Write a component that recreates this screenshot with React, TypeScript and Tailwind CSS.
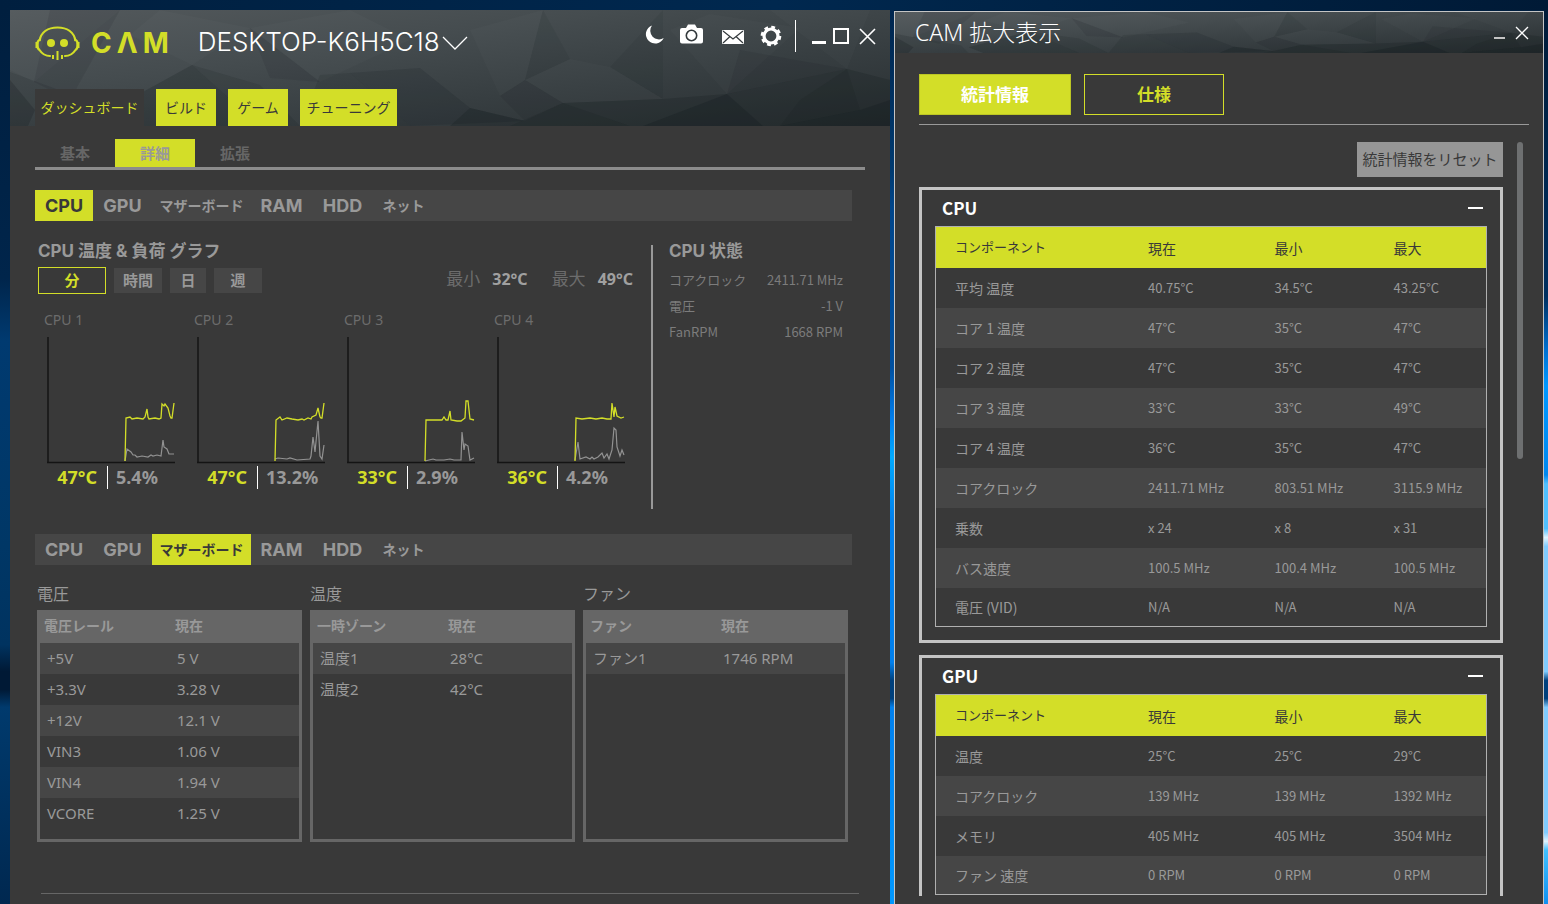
import React, { useState } from 'react';
import clsx from 'clsx';

type Row = string[];

interface CoreData {
  name: string;
  temp: string;
  load: string;
  tempLine: string;
  loadLine: string;
}

const PARTS = [
  { name: 'CPU', width: 'w-[58px]' },
  { name: 'GPU', width: 'w-[59px]' },
  { name: 'マザーボード', width: 'w-[99px]' },
  { name: 'RAM', width: 'w-[61px]' },
  { name: 'HDD', width: 'w-[61px]' },
  { name: 'ネット', width: 'w-[61px]' },
];

const CORES: CoreData[] = [
  {
    name: 'CPU 1',
    temp: '47°C',
    load: '5.4%',
    tempLine:
      '78,124 79,81 83,80 85,82 90,81 96,82 98,80 100,72 101,80 102,82 108,81 112,82 114,81 115,67 117,69 118,67 121,71 123,79 124,81 125,81 127,66',
    loadLine:
      '78,124 80,112 84,115 86,118 88,118 90,120 95,119 101,120 104,118 106,119 110,118 114,119 116,103 117,110 120,112 122,117 127,117',
  },
  {
    name: 'CPU 2',
    temp: '47°C',
    load: '13.2%',
    tempLine:
      '78,124 79,83 83,80 85,83 90,81 95,82 101,83 105,82 107,83 111,81 114,82 115,80 119,78 121,71 123,80 124,81 125,81 127,66',
    loadLine:
      '78,122 81,121 90,122 93,121 100,123 113,122 114,119 116,100 118,115 121,84 123,119 125,122 127,108',
  },
  {
    name: 'CPU 3',
    temp: '33°C',
    load: '2.9%',
    tempLine:
      '78,124 79,83 92,83 95,83 97,80 99,83 101,83 103,74 104,83 110,84 114,84 118,81 119,64 121,64 123,82 127,83',
    loadLine:
      '78,124 86,122 89,123 97,123 103,122 107,123 114,123 115,95 117,113 118,107 121,109 123,123 127,121',
  },
  {
    name: 'CPU 4',
    temp: '36°C',
    load: '4.2%',
    tempLine:
      '78,124 79,81 85,82 93,81 99,82 105,81 110,82 114,82 115,66 117,80 118,70 120,79 124,81 127,80',
    loadLine:
      '78,123 81,105 83,122 89,120 93,122 95,120 97,122 101,120 105,116 107,121 110,117 112,122 115,113 117,91 119,93 120,110 123,119 125,113 127,118',
  },
];

const CPU_STATUS: Row[] = [
  ['コアクロック', '2411.71 MHz'],
  ['電圧', '-1 V'],
  ['FanRPM', '1668 RPM'],
];

const BOARD_TABLES: { title: string; head: Row; rows: Row[] }[] = [
  {
    title: '電圧',
    head: ['電圧レール', '現在'],
    rows: [
      ['+5V', '5 V'],
      ['+3.3V', '3.28 V'],
      ['+12V', '12.1 V'],
      ['VIN3', '1.06 V'],
      ['VIN4', '1.94 V'],
      ['VCORE', '1.25 V'],
    ],
  },
  {
    title: '温度',
    head: ['一時ゾーン', '現在'],
    rows: [
      ['温度1', '28°C'],
      ['温度2', '42°C'],
    ],
  },
  { title: 'ファン', head: ['ファン', '現在'], rows: [['ファン1', '1746 RPM']] },
];

const STAT_HEAD: Row = ['コンポーネント', '現在', '最小', '最大'];

const CPU_STATS: Row[] = [
  ['平均 温度', '40.75°C', '34.5°C', '43.25°C'],
  ['コア 1 温度', '47°C', '35°C', '47°C'],
  ['コア 2 温度', '47°C', '35°C', '47°C'],
  ['コア 3 温度', '33°C', '33°C', '49°C'],
  ['コア 4 温度', '36°C', '35°C', '47°C'],
  ['コアクロック', '2411.71 MHz', '803.51 MHz', '3115.9 MHz'],
  ['乗数', 'x 24', 'x 8', 'x 31'],
  ['バス速度', '100.5 MHz', '100.4 MHz', '100.5 MHz'],
  ['電圧 (VID)', 'N/A', 'N/A', 'N/A'],
];

const GPU_STATS: Row[] = [
  ['温度', '25°C', '25°C', '29°C'],
  ['コアクロック', '139 MHz', '139 MHz', '1392 MHz'],
  ['メモリ', '405 MHz', '405 MHz', '3504 MHz'],
  ['ファン 速度', '0 RPM', '0 RPM', '0 RPM'],
];

// Low-poly backdrop behind both title bars
const PolyBackdrop: React.FC<{ id: string }> = ({ id }) => (
  <svg
    className="absolute inset-0 h-full w-full"
    viewBox="0 0 880 116"
    preserveAspectRatio="none"
    aria-hidden="true"
  >
    <defs>
      <linearGradient id={id} x1="0" y1="0" x2="1" y2="1">
        <stop offset="0" stopColor="#53595c" />
        <stop offset="0.35" stopColor="#454c4f" />
        <stop offset="0.65" stopColor="#373e41" />
        <stop offset="1" stopColor="#282e31" />
      </linearGradient>
    </defs>
    <rect width="880" height="116" fill={`url(#${id})`} />
    <g fill="#ffffff" fillOpacity="0.018">
      <polygon points="0,0 110,0 24,72 0,60" />
      <polygon points="150,0 240,18 182,55 120,25" />
      <polygon points="240,18 340,0 400,30 310,72" />
      <polygon points="460,20 533,0 515,70 490,86" />
      <polygon points="560,49 600,57 653,89 553,93 515,70" />
      <polygon points="660,20 700,4 790,18 717,84" />
      <polygon points="760,0 860,0 837,59" />
    </g>
    <g fill="#10181b">
      <polygon fillOpacity="0.12" points="0,62 90,95 100,116 0,116" />
      <polygon fillOpacity="0.22" points="0,70 25,100 18,116 0,116" />
      <polygon fillOpacity="0.1" points="24,72 40,0 110,0 60,90" />
      <polygon fillOpacity="0.2" points="182,55 100,100 120,116 250,116" />
      <polygon fillOpacity="0.12" points="182,55 250,75 290,116 250,116" />
      <polygon fillOpacity="0.12" points="310,65 340,63 400,116 290,116" />
      <polygon fillOpacity="0.14" points="340,63 410,58 460,98 515,111 400,116" />
      <polygon fillOpacity="0.1" points="240,18 310,72 260,68" />
      <polygon fillOpacity="0.08" points="533,0 560,49 515,70" />
      <polygon fillOpacity="0.08" points="600,57 653,0 653,89" />
      <polygon fillOpacity="0.1" points="515,70 553,93 515,111 490,86" />
      <polygon fillOpacity="0.2" points="460,98 515,111 553,93 653,89 717,84 837,59 880,70 880,116 440,116" />
      <polygon fillOpacity="0.12" points="553,93 620,116 500,116" />
      <polygon fillOpacity="0.25" points="717,84 633,116 753,116" />
      <polygon fillOpacity="0.12" points="837,59 850,100 770,116 790,90" />
      <polygon fillOpacity="0.25" points="850,100 880,90 880,116 770,116" />
      <polygon fillOpacity="0.1" points="717,84 730,40 837,59" />
    </g>
  </svg>
);

const SkullLogo = () => (
  <svg width="46" height="36" viewBox="0 0 46 36" fill="none" stroke="#d3de28" aria-hidden="true">
    <path d="M4.500 16C6 7 13 2.500 22.500 2.500S39 7 40.500 16" strokeWidth="2.200" />
    <path d="M4.500 15C1.500 16 1.500 23.500 4.500 25C6.500 28 10 31 15 31" strokeWidth="2.200" strokeLinecap="round" />
    <path d="M40.500 15c3 1 3 8.500 0 10C38.500 28 35 31 30 31" strokeWidth="2.200" strokeLinecap="round" />
    <path d="M2 17v6M43 17v6" strokeWidth="3" />
    <circle cx="16" cy="18" r="4" fill="#d3de28" stroke="none" />
    <circle cx="29" cy="18" r="4" fill="#d3de28" stroke="none" />
    <path d="M22.500 26v9M18 30v4M27 30v4" strokeWidth="2" />
  </svg>
);

const PartTabs: React.FC<{ initial: string; label: string }> = ({ initial, label }) => {
  const [active, setActive] = useState(initial);
  return (
    <nav aria-label={label} className="mr-[13px] flex h-[31px] bg-[#464646]">
      {PARTS.map((part) => (
        <button
          key={part.name}
          type="button"
          onClick={() => setActive(part.name)}
          className={clsx(
            'shrink-0 font-bold whitespace-nowrap',
            part.width,
            /^[A-Z]+$/.test(part.name) ? 'font-[Inter,sans-serif] text-lg' : 'text-sm',
            active === part.name ? 'bg-[#d3de28] text-[#393939]' : 'text-[#999]',
          )}
        >
          {part.name}
        </button>
      ))}
    </nav>
  );
};

const CoreChart: React.FC<{ core: CoreData }> = ({ core }) => (
  <div className="w-[150px]">
    <div className="pl-[6px] text-sm leading-[22px] text-[#6c6c6c]">{core.name}</div>
    <svg className="mt-[6px] ml-[9px] block" width="128" height="127" viewBox="0 0 128 127" fill="none" aria-hidden="true">
      <path d="M1 0v126M0 125.500h128" stroke="#141414" strokeWidth="1.500" />
      <polyline points={core.loadLine} stroke="#929292" strokeWidth="1.200" />
      <polyline points={core.tempLine} stroke="#d3de28" strokeWidth="1.300" />
    </svg>
    <div className="mt-px flex h-6 items-center text-lg font-bold">
      <span className="w-[59px] text-right text-[#d3de28]">{core.temp}</span>
      <span className="ml-[10px] h-[23px] w-px bg-white" />
      <span className="ml-2 text-[#999]">{core.load}</span>
    </div>
  </div>
);

const BoardTable: React.FC<{ title: string; head: Row; rows: Row[] }> = ({ title, head, rows }) => (
  <section className="min-w-0">
    <h3 className="text-base leading-[26px] text-[#999]">{title}</h3>
    <div className="mt-[3px] h-[232px] border-[3px] border-t-0 border-[#666]">
      <table className="w-full table-fixed border-collapse text-left text-[15px] text-[#999]">
        <thead>
          <tr className="h-[33px] bg-[#666] text-sm">
            <th className="w-[133px] pb-[2px] pl-1 font-bold">{head[0]}</th>
            <th className="pb-[2px] pl-[2px] font-bold">{head[1]}</th>
          </tr>
        </thead>
        <tbody>
          {rows.map((row) => (
            <tr key={row[0]} className="h-[31px] odd:bg-[#464646]">
              <td className="pl-[7px]">{row[0]}</td>
              <td className="pl-1">{row[1]}</td>
            </tr>
          ))}
        </tbody>
      </table>
    </div>
  </section>
);

const StatPanel: React.FC<{ title: string; rows: Row[] }> = ({ title, rows }) => {
  const [open, setOpen] = useState(true);
  return (
    <section className="border-[3px] border-[#c4c4c4] px-[13px] pb-[13px]">
      <div className="flex h-9 items-center justify-between pr-1 pl-[7px]">
        <h2 className="font-['Noto_Sans_CJK_JP',sans-serif] text-[17px] font-bold text-white">{title}</h2>
        <button type="button" aria-label={`${title} を折りたたむ`} onClick={() => setOpen(!open)} className="py-2">
          <span className="block h-[2px] w-[15px] bg-white" />
        </button>
      </div>
      {open && (
        <div className="border border-[#b0b0b0]">
          <table className="w-full table-fixed border-collapse text-left font-['Noto_Sans_CJK_JP',sans-serif] text-sm text-[#999]">
            <thead>
              <tr className="h-[41px] bg-[#d3de28] text-[#393939]">
                {STAT_HEAD.map((h, i) => (
                  <th
                    key={h}
                    className={clsx(
                      'font-normal',
                      i === 0 && 'w-[212px] pl-[19px] text-[13px]',
                      i === 1 && 'w-[23%]',
                      i === 2 && 'w-[119px]',
                    )}
                  >
                    {h}
                  </th>
                ))}
              </tr>
            </thead>
            <tbody>
              {rows.map((row) => (
                <tr key={row[0]} className="h-10 last:h-[38px] even:bg-[#464646]">
                  {row.map((cell, i) => (
                    <td key={i} className={i === 0 ? 'pl-[19px]' : 'text-[13px]'}>
                      {cell}
                    </td>
                  ))}
                </tr>
              ))}
            </tbody>
          </table>
        </div>
      )}
    </section>
  );
};

const MAIN_TABS = [
  { name: 'ダッシュボード', width: 'w-[109px] mr-3' },
  { name: 'ビルド', width: 'w-[60px] mr-3' },
  { name: 'ゲーム', width: 'w-[60px] mr-3' },
  { name: 'チューニング', width: 'w-[97px]' },
];

const RANGES = [
  { name: '分', width: 'w-[68px] mr-2' },
  { name: '時間', width: 'w-12 mr-2' },
  { name: '日', width: 'w-9 mr-2' },
  { name: '週', width: 'w-12' },
];

const DashboardWindow = () => {
  const [tab, setTab] = useState('ダッシュボード');
  const [view, setView] = useState('詳細');
  const [range, setRange] = useState('分');

  return (
    <main className="flex min-w-0 flex-col overflow-hidden bg-[#393939]">
      <header className="relative h-[116px] shrink-0">
        <PolyBackdrop id="poly-main" />
        <div className="relative flex h-full flex-col justify-between pr-[14px] pl-[25px]">
          <div className="flex items-start justify-between">
            <div className="flex h-[66px] items-center">
              <SkullLogo />
              <div
                aria-label="CAM"
                className="ml-[10px] flex gap-[5px] font-[Inter,sans-serif] text-[28px] font-bold text-[#d3de28]"
              >
                <span>C</span>
                <span>Λ</span>
                <span>M</span>
              </div>
              <select
                aria-label="デバイス"
                className="mb-1 ml-[29px] appearance-none bg-transparent font-[Inter,sans-serif] text-[26px] font-light text-white focus:outline-none"
              >
                <option>DESKTOP-K6H5C18</option>
              </select>
              <svg className="ml-px" width="26" height="14" viewBox="0 0 26 14" fill="none" stroke="#fff" strokeWidth="1.300" aria-hidden="true">
                <path d="M1 1l12 12L25 1" />
              </svg>
            </div>
            <div className="mt-[10px] flex h-8 items-center text-white">
              <button type="button" aria-label="ナイトモード" className="mr-4 mb-1">
                <svg width="19" height="19" viewBox="0 0 19 19" fill="currentColor">
                  <path d="M7 .5A9.300 9.300 0 1 0 18.700 13 8.700 8.700 0 0 1 7 .5Z" />
                </svg>
              </button>
              <button type="button" aria-label="スクリーンショット" className="mr-[19px] mb-1">
                <svg width="23" height="20" viewBox="0 0 23 20">
                  <path
                    fill="currentColor"
                    d="M2 4h4l2-3.500h7L17 4h4q2 0 2 2v11.500q0 2-2 2H2q-2 0-2-2V6q0-2 2-2Z"
                  />
                  <circle cx="11.500" cy="11.500" r="5.200" fill="none" stroke="#33393c" strokeWidth="1.600" />
                </svg>
              </button>
              <button type="button" aria-label="メッセージ" className="mt-[2px] mr-4">
                <svg width="22" height="14" viewBox="0 0 22 14">
                  <rect width="22" height="14" rx="1" fill="currentColor" />
                  <path d="M1 1l10 8 10-8M1 13l7-6.500M21 13l-7-6.500" fill="none" stroke="#33393c" strokeWidth="1.200" />
                </svg>
              </button>
              <button type="button" aria-label="設定" className="mr-[13px]">
                <svg width="22" height="22" viewBox="0 0 22 22" fill="none" stroke="currentColor">
                  <circle cx="11" cy="11" r="7" strokeWidth="3.200" />
                  <circle cx="11" cy="11" r="9" strokeWidth="2.600" strokeDasharray="3.800 3.269" />
                </svg>
              </button>
              <span className="mr-4 h-8 w-px bg-white" />
              <button type="button" aria-label="最小化" className="mr-[7px] pt-3">
                <span className="block h-[3px] w-[14px] bg-white" />
              </button>
              <button type="button" aria-label="最大化" className="mr-[10px] size-4 border-2 border-white" />
              <button type="button" aria-label="閉じる">
                <svg width="17" height="17" viewBox="0 0 17 17" stroke="currentColor" strokeWidth="1.600">
                  <path d="M1 1l15 15M16 1L1 16" />
                </svg>
              </button>
            </div>
          </div>
          <nav aria-label="メイン" className="flex h-[37px]">
            {MAIN_TABS.map((t) => (
              <button
                key={t.name}
                type="button"
                onClick={() => setTab(t.name)}
                className={clsx(
                  'shrink-0 text-sm whitespace-nowrap',
                  t.width,
                  tab === t.name ? 'bg-[#393939] text-[#d3de28]' : 'bg-[#d3de28] text-[#393939]',
                )}
              >
                {t.name}
              </button>
            ))}
          </nav>
        </div>
      </header>

      <div className="px-[25px] pt-[13px]">
        <nav aria-label="表示" className="flex border-b-[3px] border-[#8c8c8c]">
          {['基本', '詳細', '拡張'].map((v) => (
            <button
              key={v}
              type="button"
              onClick={() => setView(v)}
              className={clsx(
                'h-7 w-20 text-[15px] font-bold',
                view === v ? 'bg-[#d3de28] text-[#999]' : 'text-[#666]',
              )}
            >
              {v}
            </button>
          ))}
        </nav>

        <div className="mt-5">
          <PartTabs initial="CPU" label="グラフ" />
        </div>

        <div className="mt-6 mr-[22px] ml-[3px] flex h-[264px]">
          <section className="min-w-0 flex-1">
            <h2 className="font-[Inter,'Noto_Sans_CJK_JP',sans-serif] text-[17px] leading-3 font-bold text-[#999]">
              CPU 温度 & 負荷 グラフ
            </h2>
            <div className="mt-[10px] flex h-[27px] items-center">
              {RANGES.map((r) => (
                <button
                  key={r.name}
                  type="button"
                  onClick={() => setRange(r.name)}
                  className={clsx(
                    'text-[15px] font-bold',
                    r.width,
                    range === r.name
                      ? 'h-[27px] border border-[#d3de28] text-[#d3de28]'
                      : 'h-[25px] bg-[#464646] text-[#999]',
                  )}
                >
                  {r.name}
                </button>
              ))}
              <dl className="mr-[18px] mb-1 ml-auto flex items-center text-[17px] leading-[22px] text-[#6c6c6c]">
                <dt>最小</dt>
                <dd className="ml-3 text-base font-bold text-[#a0a0a0]">32°C</dd>
                <dt className="ml-6">最大</dt>
                <dd className="ml-3 text-base font-bold text-[#a0a0a0]">49°C</dd>
              </dl>
            </div>
            <div className="mt-[15px] flex">
              {CORES.map((core) => (
                <CoreChart key={core.name} core={core} />
              ))}
            </div>
          </section>

          <section className="flex w-[192px] shrink-0 flex-col border-l-2 border-[#999] pl-4">
            <h2 className="font-[Inter,'Noto_Sans_CJK_JP',sans-serif] text-[17px] leading-3 font-bold text-[#999]">
              CPU 状態
            </h2>
            <dl className="mt-[10px] font-['Noto_Sans_CJK_JP',sans-serif] text-[13px] text-[#7c7c7c]">
              {CPU_STATUS.map(([name, value]) => (
                <div key={name} className="flex h-[26px] items-center justify-between">
                  <dt>{name}</dt>
                  <dd>{value}</dd>
                </div>
              ))}
            </dl>
          </section>
        </div>

        <div className="mt-[25px]">
          <PartTabs initial="マザーボード" label="詳細" />
        </div>

        <div className="mt-4 mr-[17px] ml-[2px] grid grid-cols-3 gap-2">
          {BOARD_TABLES.map((t) => (
            <BoardTable key={t.title} {...t} />
          ))}
        </div>
        <hr className="mt-[51px] mr-[6px] ml-[6px] border-[#666]" />
      </div>
    </main>
  );
};

const ExpandedWindow = () => {
  const [page, setPage] = useState('統計情報');
  return (
    <aside className="mt-px flex min-h-0 min-w-0 flex-col overflow-hidden border border-b-0 border-[#c4c4c4] bg-[#393939] pb-2">
      <header className="relative h-[41px] shrink-0">
        <PolyBackdrop id="poly-side" />
        <div className="relative flex h-full items-center justify-between pr-[14px] pl-5 text-white">
          <h1 className="font-['Noto_Sans','Noto_Sans_CJK_JP',sans-serif] text-[23px] font-light">CAM 拡大表示</h1>
          <div className="flex items-center gap-[10px]">
            <button type="button" aria-label="最小化" className="pt-[10px]">
              <span className="block h-[2px] w-[11px] bg-[#c4c4c4]" />
            </button>
            <button type="button" aria-label="閉じる">
              <svg width="14" height="14" viewBox="0 0 14 14" stroke="currentColor" strokeWidth="1.300">
                <path d="M1 1l12 12M13 1L1 13" />
              </svg>
            </button>
          </div>
        </div>
      </header>

      <nav aria-label="ページ" className="mt-[21px] mr-[14px] ml-6 flex gap-[13px] border-b border-[#999] pb-[9px]">
        {['統計情報', '仕様'].map((p) => (
          <button
            key={p}
            type="button"
            onClick={() => setPage(p)}
            className={clsx(
              'h-[41px] border text-[17px] font-bold',
              p === '仕様' ? 'w-[140px]' : 'w-[152px]',
              page === p ? 'border-[#bcc624] bg-[#d3de28] text-white' : 'border-[#d3de28] text-[#d3de28]',
            )}
          >
            {p}
          </button>
        ))}
      </nav>

      <div className="mt-[17px] mr-5 ml-6 flex min-h-0 flex-1 gap-[14px]">
        <div className="min-w-0 flex-1 overflow-hidden">
          <div className="flex justify-end">
            <button type="button" className="h-[35px] w-[146px] bg-[#969696] text-[15px] whitespace-nowrap text-[#393939]">
              統計情報をリセット
            </button>
          </div>
          <div className="mt-[10px] flex flex-col gap-3">
            <StatPanel title="CPU" rows={CPU_STATS} />
            <StatPanel title="GPU" rows={GPU_STATS} />
          </div>
        </div>
        <div className="h-[42%] w-[6px] shrink-0 rounded-full bg-[#6e7071]" />
      </div>
    </aside>
  );
};

export default function App() {
  return (
    <div className="flex h-screen flex-col overflow-hidden bg-[#001f3f] font-['Noto_Sans','Noto_Sans_CJK_JP',sans-serif]">
      <div className="h-[10px] shrink-0 bg-linear-to-r from-[#001f3f] via-[#00284f] to-[#001a36]" />
      {/* Desktop wallpaper shows through between the windows */}
      <div className="grid min-h-0 flex-1 grid-cols-[10px_880fr_4px_650fr_4px] grid-rows-[minmax(0,1fr)]">
        <div className="bg-[linear-gradient(#001f3f,#00254b_30%,#003a70_37%,#003766_60%,#003360_71%,#001935_74%,#001935_76%,#003a6d_78%,#002850)]" />
        <DashboardWindow />
        <div className="bg-[linear-gradient(#00264f,#003a70_18%,#00458a_22%,#0050a0_40%,#0060bb_42%,#0080f0_46%,#00aaff_50%,#0080ee_57%,#0080ee_73%,#00407c_75%,#00407c_77%,#0080ee_78%,#0098ff)]" />
        <ExpandedWindow />
        <div className="bg-[linear-gradient(#001b38,#002f5f_32%,#0070d0_38%,#0098ff_42%,#0088ee_52%,#50c0ff_53%,#50c0ff_58%,#e0f4ff_59%,#80ccff_60%,#80ccff_74%,#00407c_75%,#00407c_77%,#80ccff_78%,#80ccff_92%,#e0f4ff_93%,#40c0ff_94%,#1090f0)]" />
      </div>
    </div>
  );
}
